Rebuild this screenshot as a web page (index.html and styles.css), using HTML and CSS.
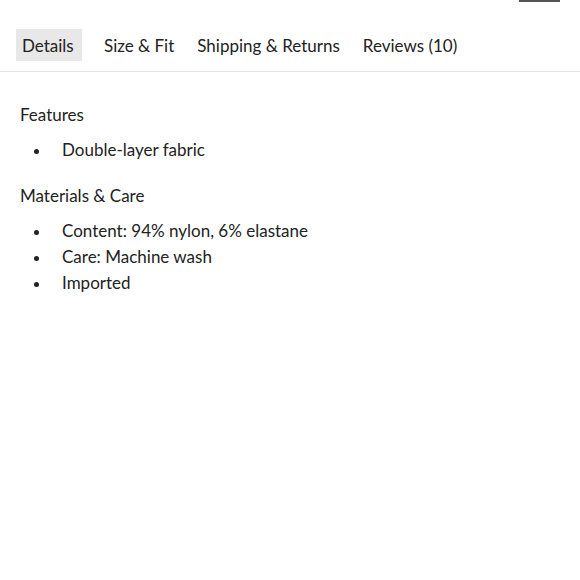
FILE: index.html
```html
<!DOCTYPE html>
<html>
<head>
<meta charset="utf-8">
<link rel="stylesheet" href="styles.css">
</head>
<body>
<div class="topbar"><span class="topline"></span></div>
<nav class="tabs">
  <span class="tab active">Details</span>
  <span class="tab">Size &amp; Fit</span>
  <span class="tab">Shipping &amp; Returns</span>
  <span class="tab">Reviews (10)</span>
</nav>
<section class="content">
  <h3 class="heading">Features</h3>
  <ul class="list">
    <li>Double-layer fabric</li>
  </ul>
  <h3 class="heading">Materials &amp; Care</h3>
  <ul class="list">
    <li>Content: 94% nylon, 6% elastane</li>
    <li>Care: Machine wash</li>
    <li>Imported</li>
  </ul>
</section>
</body>
</html>
```
FILE: styles.css
```css
html, body {
  margin: 0;
  padding: 0;
  background: #fff;
}
body {
  font-family: Lato, "Open Sans", sans-serif;
  color: #222;
  font-size: 17px;
}
.topbar {
  height: 29px;
  display: flex;
  justify-content: flex-end;
  padding-right: 20px;
}
.topline {
  width: 41px;
  height: 2px;
  background: #555;
}
.tabs {
  display: flex;
  gap: 11px;
  padding: 0 0 10px 16px;
  border-bottom: 1px solid #e3e3e3;
}
.tab {
  padding: 0 6px;
  height: 32px;
  line-height: 33px;
  white-space: nowrap;
}
.tab.active {
  background: #e8e8e8;
  min-width: 54px;
  margin-right: 5px;
}
.content {
  padding: 30px 20px;
}
.heading {
  font-weight: 400;
  font-size: 17px;
  margin: 0;
  line-height: 26px;
}
.list {
  list-style: none;
  margin: 9px 0 20px;
  padding: 0 0 0 14px;
  line-height: 26px;
}
.list li {
  display: flex;
  align-items: center;
}
.list li::before {
  content: "";
  width: 5px;
  height: 5px;
  border-radius: 50%;
  background: #222;
  margin-right: 23px;
  margin-top: 3px;
  flex-shrink: 0;
}
```
